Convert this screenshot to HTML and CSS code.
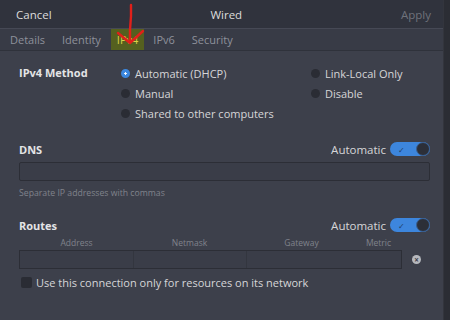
FILE: index.html
```html
<!DOCTYPE html>
<html lang="en">
<head>
    <meta charset="UTF-8">
    <title>Wired</title>
    <link rel="stylesheet" href="styles.css">
</head>
<body>
    <div class="window">
        <div class="header">
            <span class="btn">Cancel</span>
            <span class="title">Wired</span>
            <span class="btn disabled">Apply</span>
        </div>

        <div class="tabs">
            <span class="tab">Details</span>
            <span class="tab">Identity</span>
            <span class="tab active">IPv4</span>
            <span class="tab">IPv6</span>
            <span class="tab">Security</span>
        </div>

        <svg class="arrow" width="40" height="48" viewBox="0 0 40 48">
            <path d="M21 3 L21 14 L20 28 L20 40" stroke="#e0201a" stroke-width="2.4" fill="none" stroke-linecap="round"/>
            <path d="M8 31 L20 41 L33 29" stroke="#e0201a" stroke-width="2.4" fill="none" stroke-linecap="round" stroke-linejoin="round"/>
        </svg>

        <div class="content">
            <div class="method">
                <div class="label">IPv4 Method</div>
                <div class="options">
                    <div class="opt"><span class="radio on"></span>Automatic (DHCP)</div>
                    <div class="opt"><span class="radio"></span>Link-Local Only</div>
                    <div class="opt"><span class="radio"></span>Manual</div>
                    <div class="opt"><span class="radio"></span>Disable</div>
                    <div class="opt"><span class="radio"></span>Shared to other computers</div>
                </div>
            </div>

            <div class="section-row dns-row">
                <div class="label">DNS</div>
                <div class="auto">Automatic <span class="switch"><span class="tick">&#10003;</span><span class="knob"></span></span></div>
            </div>
            <div class="entry"></div>
            <div class="hint">Separate IP addresses with commas</div>

            <div class="section-row routes-row">
                <div class="label">Routes</div>
                <div class="auto">Automatic <span class="switch"><span class="tick">&#10003;</span><span class="knob"></span></span></div>
            </div>
            <div class="route-head">
                <span>Address</span>
                <span>Netmask</span>
                <span>Gateway</span>
                <span>Metric</span>
            </div>
            <div class="route-row">
                <div class="route-fields">
                    <span class="cell c1"></span>
                    <span class="cell c2"></span>
                    <span class="cell c3"></span>
                </div>
                <span class="clear">&#215;</span>
            </div>

            <div class="check-row">
                <span class="checkbox"></span>
                Use this connection only for resources on its network
            </div>
        </div>
    </div>
</body>
</html>
```

FILE: styles.css
```css
body {
    margin: 0;
    background-color: #2b2d34;
    font-family: "Open Sans", "DejaVu Sans", sans-serif;
    font-size: 11px;
    color: #dcdcdc;
}
.window {
    position: relative;
    width: 443px;
    height: 320px;
    background-color: #3d404b;
    border-right: 1px solid #33353d;
}
.header {
    height: 28px;
    display: flex;
    align-items: center;
    justify-content: space-between;
    padding: 0 12px 0 16px;
    background-color: #30333d;
    font-size: 11.5px;
}
.header .disabled {
    color: #6f727b;
}
.tabs {
    height: 21px;
    display: flex;
    align-items: stretch;
    padding-left: 3px;
    background-color: #383b46;
    border-top: 1px solid #464955;
    border-bottom: 1px solid #2f323b;
    font-size: 11px;
}
.tab {
    display: flex;
    align-items: center;
    padding: 0 7px;
    margin-right: 3px;
    color: #8e919b;
}
.tab.active {
    background-color: #55601f;
    color: #d8d24a;
    padding: 0 6px;
    margin-right: 2px;
}
.arrow {
    position: absolute;
    left: 110px;
    top: 2px;
}
.content {
    padding: 0 13px 0 19px;
}
.label {
    font-weight: bold;
    color: #e4e4e6;
}
.method {
    display: flex;
    margin-top: 12px;
}
.method .label {
    width: 103px;
    line-height: 20px;
}
.options {
    display: grid;
    grid-template-columns: 190px 120px;
}
.opt {
    display: flex;
    align-items: center;
    height: 20px;
    color: #d6d6d8;
}
.radio {
    width: 9px;
    height: 9px;
    border-radius: 50%;
    background-color: #2a2c34;
    margin: 0 5px 0 1px;
    box-sizing: border-box;
}
.radio.on {
    background-color: #3c88e0;
    border: 3px solid #3c88e0;
    background-image: radial-gradient(circle, #ffffff 55%, transparent 60%);
}
.section-row {
    display: flex;
    align-items: center;
    justify-content: space-between;
    height: 16px;
}
.dns-row {
    margin-top: 18px;
}
.routes-row {
    margin-top: 18px;
}
.auto {
    display: flex;
    align-items: center;
    color: #d6d6d8;
    font-size: 11.5px;
}
.switch {
    display: inline-flex;
    align-items: center;
    justify-content: space-between;
    width: 40px;
    height: 14px;
    margin-left: 4px;
    border-radius: 8px;
    background-color: #3d86dd;
}
.tick {
    color: #1f3f6a;
    font-size: 8px;
    margin-left: 8px;
}
.knob {
    width: 14px;
    height: 14px;
    box-sizing: border-box;
    border-radius: 50%;
    border: 1px solid #3a5f90;
    background-color: #2c2f38;
}
.entry {
    height: 17px;
    margin-top: 5px;
    border: 1px solid #2c2e36;
    border-radius: 2px;
    background-color: #3a3d48;
}
.hint {
    margin-top: 6px;
    font-size: 8.7px;
    line-height: 12px;
    color: #80838c;
}
.route-head {
    display: grid;
    grid-template-columns: 113px 113px 111px 43px;
    margin-top: 4px;
    padding-left: 1px;
    font-size: 8.5px;
    line-height: 12px;
    color: #80838c;
    text-align: center;
}
.route-row {
    display: flex;
    align-items: center;
    margin-top: 1px;
}
.route-fields {
    display: grid;
    grid-template-columns: 113px 113px 1fr;
    width: 381px;
    height: 17px;
    border: 1px solid #2c2e36;
    background-color: #3a3d48;
}
.cell {
    border-left: 1px solid #33363f;
}
.cell.c1 {
    border-left: none;
}
.clear {
    display: inline-flex;
    align-items: center;
    justify-content: center;
    width: 9px;
    height: 9px;
    margin-left: 10px;
    border-radius: 50%;
    background-color: #b7b9be;
    color: #3d404b;
    font-size: 8px;
    line-height: 1;
    font-weight: bold;
}
.check-row {
    display: flex;
    align-items: center;
    margin-top: 6px;
    padding-left: 2px;
    color: #d6d6d8;
    font-size: 11px;
}
.checkbox {
    width: 11px;
    height: 11px;
    margin-right: 4px;
    border-radius: 2px;
    background-color: #2a2c34;
}
```
